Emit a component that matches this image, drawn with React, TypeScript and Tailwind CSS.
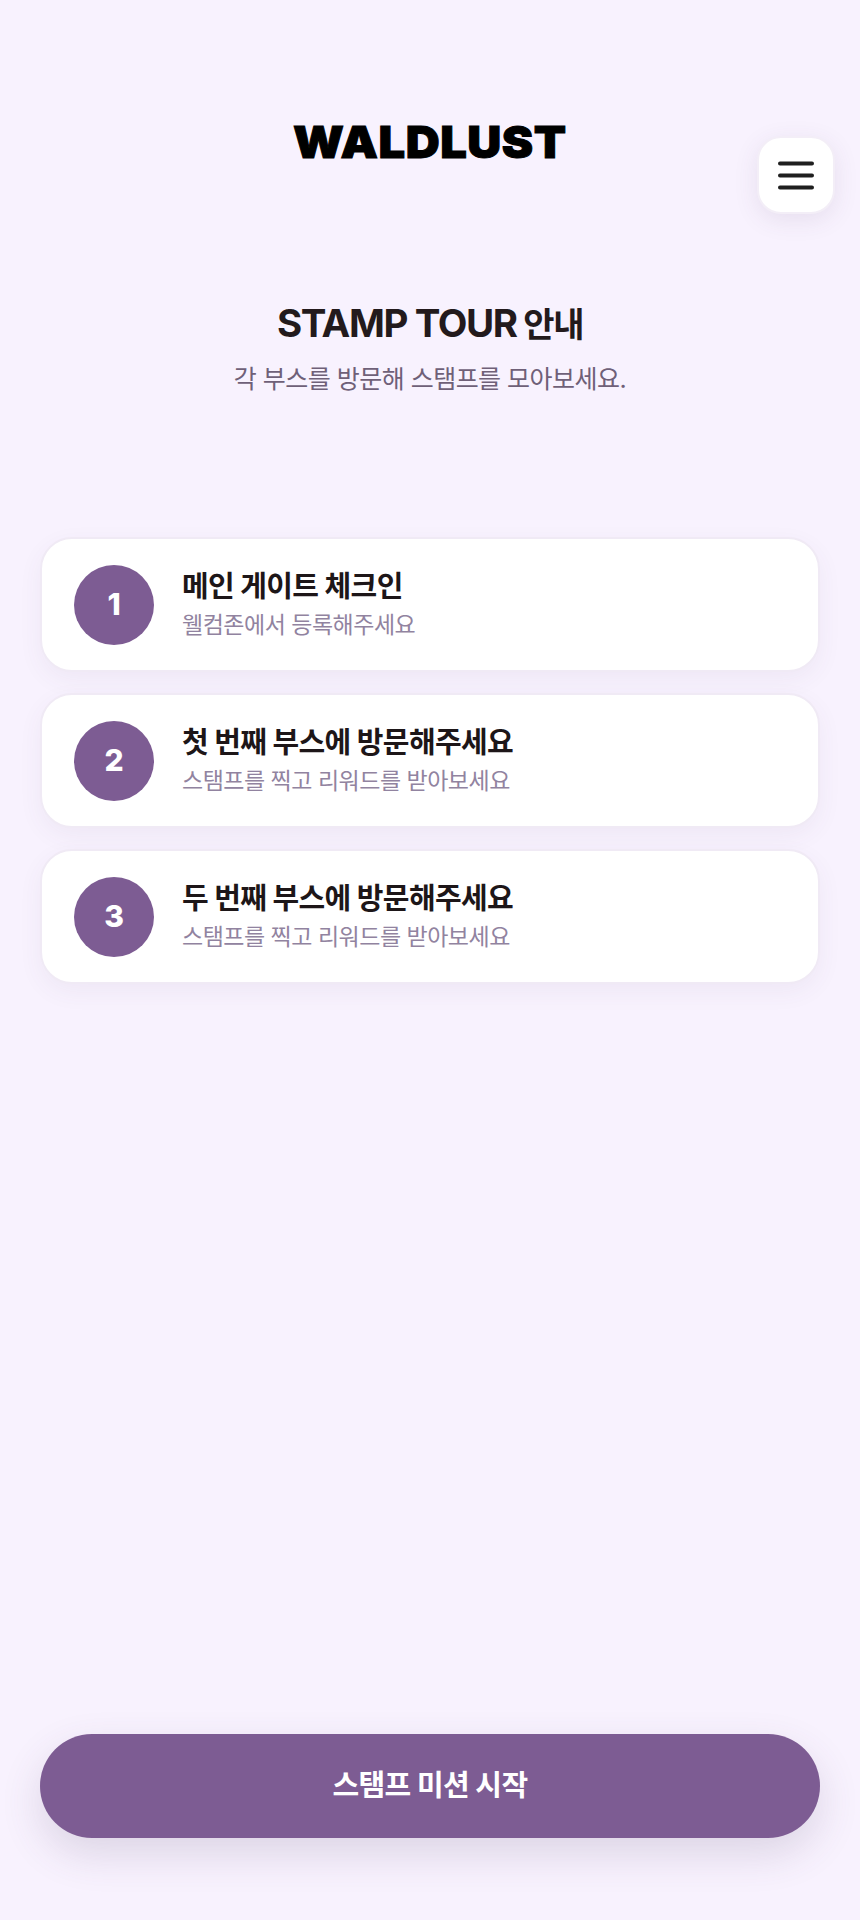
import React from 'react';

const STEPS = [
  { no: 1, title: '메인 게이트 체크인', desc: '웰컴존에서 등록해주세요' },
  { no: 2, title: '첫 번째 부스에 방문해주세요', desc: '스탬프를 찍고 리워드를 받아보세요' },
  { no: 3, title: '두 번째 부스에 방문해주세요', desc: '스탬프를 찍고 리워드를 받아보세요' },
];

function App() {
  return (
    <div className="relative h-[1920px] bg-[#f8f2fe] flex flex-col font-['Inter','Noto_Sans_CJK_KR',sans-serif]">
      {/* Logo */}
      <header className="pt-[115px] flex justify-center">
        <h1 className="text-[44px] leading-[54px] font-black text-black scale-x-[1.07] tracking-[0.5px] [-webkit-text-stroke:1px_#000]">WALDLUST</h1>
      </header>

      {/* Menu */}
      <button className="absolute top-[136px] right-[25px] w-[78px] h-[78px] bg-white rounded-[24px] border-2 border-[#f3eef7] shadow-[0_6px_24px_rgba(80,60,100,0.1)] flex items-center justify-center">
        <svg width="36" height="29" viewBox="0 0 36 29" fill="none" stroke="#1f1f1f" strokeWidth="4" strokeLinecap="round">
          <path d="M2 2.5h32M2 14.5h32M2 26.5h32" />
        </svg>
      </button>

      {/* Intro */}
      <section className="mt-[132px] text-center">
        <h2 className="text-[34px] leading-[44px] font-bold text-[#231a1c] tracking-[-1.4px]">
          <span className="text-[38.5px]">STAMP TOUR</span> 안내
        </h2>
        <p className="mt-[14px] text-[25px] leading-[36px] text-[#6f6078] tracking-[-0.52px]">각 부스를 방문해 스탬프를 모아보세요.</p>
      </section>

      {/* Steps */}
      <ul className="mt-[140px] px-[40px] flex flex-col gap-[21px]">
        {STEPS.map((s) => (
          <li
            key={s.no}
            className="h-[135px] bg-white rounded-[32px] border-2 border-[#f0eaf5] shadow-[0_8px_24px_rgba(80,60,100,0.06)] px-[32px] flex items-center gap-[28px]"
          >
            <div className="w-[80px] h-[80px] rounded-full bg-[#7d5c93] text-white flex items-center justify-center text-[30px] font-extrabold">
              {s.no}
            </div>
            <div>
              <div className="text-[29px] leading-[36px] font-bold text-[#1d1618] tracking-[-0.65px]">{s.title}</div>
              <div className="mt-[4px] text-[23px] leading-[32px] text-[#9183a0] tracking-[-0.5px]">{s.desc}</div>
            </div>
          </li>
        ))}
      </ul>

      {/* Start */}
      <div className="mt-auto px-[40px] pb-[82px]">
        <button className="w-full h-[104px] rounded-[52px] bg-[#7d5c93] text-white text-[29px] font-bold tracking-[-0.6px] shadow-[0_16px_40px_rgba(80,60,100,0.16)]">
          스탬프 미션 시작
        </button>
      </div>
    </div>
  );
}

export default App;
